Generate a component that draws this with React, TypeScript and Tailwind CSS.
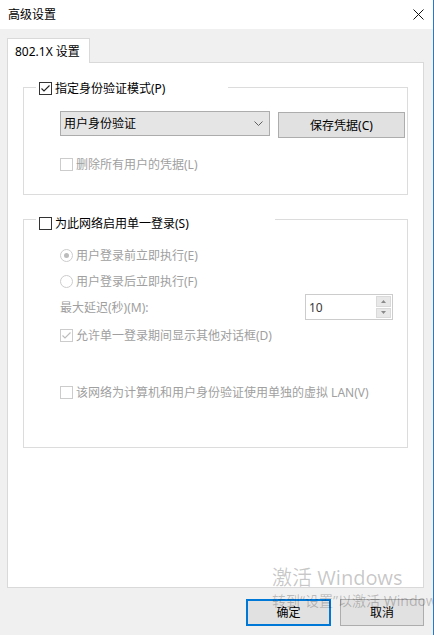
import React from "react";

const font = { fontFamily: '"Noto Sans", "Noto Sans CJK SC", sans-serif' };

function Check({ checked, disabled }: { checked?: boolean; disabled?: boolean }) {
  return (
    <span
      className={`flex h-[13px] w-[13px] shrink-0 items-center justify-center border bg-white ${
        disabled ? "border-[#cccccc]" : "border-[#333333]"
      }`}
    >
      {checked && (
        <svg width="11" height="11" viewBox="0 0 11 11">
          <path d="M1.5 5.5 L4 8 L9.5 2.5" fill="none" stroke={disabled ? "#bcbcbc" : "#222"} strokeWidth="1.1" />
        </svg>
      )}
    </span>
  );
}

function Radio({ selected }: { selected?: boolean }) {
  return (
    <span className="flex h-[13px] w-[13px] shrink-0 items-center justify-center rounded-full border border-[#cccccc] bg-white">
      {selected && <span className="h-[5px] w-[5px] rounded-full bg-[#bcbcbc]" />}
    </span>
  );
}

function Row({ children, className = "" }: { children: React.ReactNode; className?: string }) {
  return <div className={`flex h-[13px] items-center ${className}`}>{children}</div>;
}

export default function App() {
  return (
    <div
      className="relative h-[635px] w-[434px] overflow-hidden border-r border-[#2b79c2] bg-[#f0f0f0] text-[12px] leading-[13px] text-black"
      style={font}
    >
      {/* title bar */}
      <div className="flex h-[29px] items-center justify-between bg-white pl-[8px] pr-[9px]">
        <span className="pb-px">高级设置</span>
        <svg width="11" height="11" viewBox="0 0 11 11">
          <path d="M0.5 0.5 L10.5 10.5 M10.5 0.5 L0.5 10.5" stroke="#111" strokeWidth="1" />
        </svg>
      </div>

      <div className="pl-[7px]">
        {/* tab */}
        <div className="relative z-10 -mb-px mt-[9px] flex h-[25px] w-[83px] items-center border border-b-0 border-[#d9d9d9] bg-white pl-[7px]">
          802.1X 设置
        </div>

        {/* page */}
        <div className="h-[526px] w-[417px] border border-[#d9d9d9] bg-white pl-[15px] pt-[24px]">
          {/* group 1 */}
          <div className="relative h-[108px] w-[385px] border border-[#dcdcdc] pl-[36px] pt-[23px]">
            <div className="absolute left-[12px] top-[-6px] flex h-[13px] w-[192px] items-center bg-white pl-[3px]">
              <Check checked />
              <span className="ml-[3px]">指定身份验证模式(P)</span>
            </div>
            <div className="flex items-start">
              <div className="flex h-[25px] w-[210px] items-center justify-between border border-[#acacac] bg-[#e5e5e5] pl-[3px] pr-[6px]">
                <span>用户身份验证</span>
                <svg width="9" height="5" viewBox="0 0 9 5">
                  <path d="M0.5 0.5 L4.5 4.5 L8.5 0.5" fill="none" stroke="#606060" strokeWidth="1" />
                </svg>
              </div>
              <div className="ml-[8px] mt-px flex h-[26px] w-[127px] items-center justify-center border border-[#adadad] bg-[#e1e1e1]">
                保存凭据(C)
              </div>
            </div>
            <Row className="mt-[20px] text-[#a0a0a0]">
              <Check disabled />
              <span className="ml-[3px]">删除所有用户的凭据(L)</span>
            </Row>
          </div>

          {/* group 2 */}
          <div className="relative mt-[24px] h-[229px] w-[385px] border border-[#dcdcdc] pl-[36px] pt-[29px] text-[#a0a0a0]">
            <div className="absolute left-[12px] top-[-3px] flex h-[13px] w-[239px] items-center bg-white pl-[3px] text-black">
              <Check />
              <span className="ml-[3px]">为此网络启用单一登录(S)</span>
            </div>
            <Row>
              <Radio selected />
              <span className="ml-[3px]">用户登录前立即执行(E)</span>
            </Row>
            <Row className="mt-[13px]">
              <Radio />
              <span className="ml-[3px]">用户登录后立即执行(F)</span>
            </Row>
            <div className="mt-[6px] flex h-[26px] items-center">
              <span className="w-[245px]">最大延迟(秒)(M):</span>
              <div className="flex h-[26px] w-[88px] border border-[#cccccc] bg-white">
                <span className="flex flex-1 items-center pl-[3px] text-[#3a3a3a]">10</span>
                <div className="flex w-[17px] flex-col gap-px p-px">
                  <div className="flex flex-1 items-center justify-center border border-[#dadada] bg-[#e8e8e8]">
                    <svg width="5" height="3" viewBox="0 0 5 3">
                      <path d="M0 3 L2.5 0 L5 3 Z" fill="#8a8a8a" />
                    </svg>
                  </div>
                  <div className="flex flex-1 items-center justify-center border border-[#dadada] bg-[#e8e8e8]">
                    <svg width="5" height="3" viewBox="0 0 5 3">
                      <path d="M0 0 L2.5 3 L5 0 Z" fill="#8a8a8a" />
                    </svg>
                  </div>
                </div>
              </div>
            </div>
            <Row className="mt-[9px]">
              <Check checked disabled />
              <span className="ml-[3px]">允许单一登录期间显示其他对话框(D)</span>
            </Row>
            <Row className="mt-[44px]">
              <Check disabled />
              <span className="ml-[3px]">该网络为计算机和用户身份验证使用单独的虚拟 LAN(V)</span>
            </Row>
          </div>
        </div>

        {/* buttons */}
        <div className="mt-[11px] flex w-[417px] justify-end gap-[9px]">
          <div className="flex h-[27px] w-[85px] items-center justify-center border-2 border-[#0078d7] bg-[#e1e1e1]">
            确定
          </div>
          <div className="flex h-[27px] w-[84px] items-center justify-center border border-[#adadad] bg-[#e1e1e1]">
            取消
          </div>
        </div>
      </div>

      {/* activation watermark */}
      <div className="pointer-events-none absolute left-[272px] top-[567px] whitespace-nowrap text-black/[0.22]">
        <div className="text-[20px] leading-[22px]">激活 Windows</div>
        <div className="mt-[4px] text-[14px] leading-[15px]">转到“设置”以激活 Windows。</div>
      </div>
    </div>
  );
}
